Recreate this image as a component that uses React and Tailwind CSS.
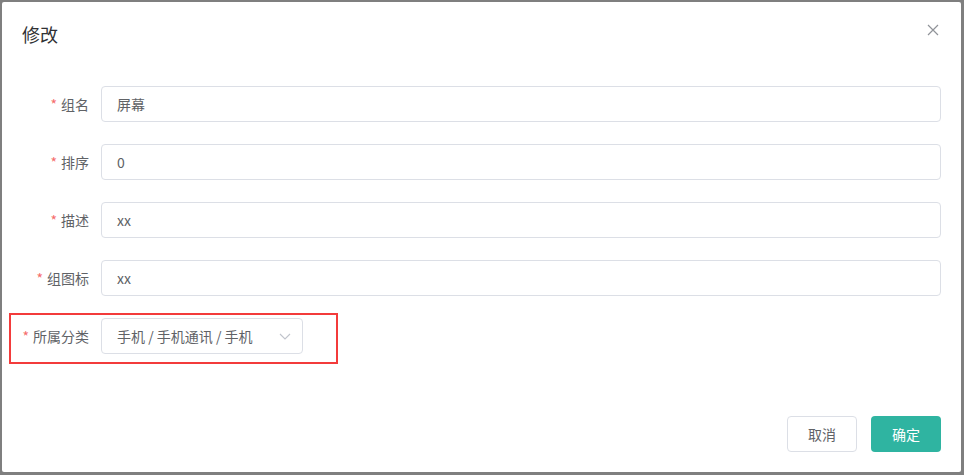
import React from "react";

const font = { fontFamily: '"Noto Sans CJK SC", "Noto Sans", sans-serif' };

function Row({ label, children }) {
  return (
    <div className="flex items-center h-[36px] mb-[22px]">
      <div className="w-[79px] pr-[12px] flex justify-end items-center text-[14px] text-[#606266] leading-[36px]">
        <span className="text-[#f56c6c] mr-[4px]">*</span>
        <span>{label}</span>
      </div>
      {children}
    </div>
  );
}

function Input({ value }) {
  return (
    <div className="flex-1 h-[36px] border border-[#dcdfe6] rounded-[4px] px-[15px] flex items-center text-[14px] text-[#606266] bg-white">
      {value}
    </div>
  );
}

export default function App() {
  return (
    <div className="w-[964px] h-[475px] bg-[#7f7f7f] pt-[2px] pl-[2px] overflow-hidden" style={font}>
      <div className="w-[959px] h-[470px] bg-white relative flex flex-col rounded-[2px]">
        <div className="pt-[20px] px-[20px] pb-[10px]">
          <div className="text-[18px] leading-[24px] text-[#303133]">修改</div>
          <button className="absolute top-[20px] right-[20px] w-[16px] h-[16px] flex items-center justify-center text-[#909399]">
            <svg width="12" height="12" viewBox="0 0 12 12">
              <path d="M1 1L11 11M11 1L1 11" stroke="#909399" strokeWidth="1.2" fill="none" />
            </svg>
          </button>
        </div>
        <div className="pt-[30px] pb-[30px] px-[20px]">
          <Row label="组名"><Input value="屏幕" /></Row>
          <Row label="排序"><Input value="0" /></Row>
          <Row label="描述"><Input value="xx" /></Row>
          <Row label="组图标"><Input value="xx" /></Row>
          <div className="relative">
            <Row label="所属分类">
              <div className="w-[202px] h-[36px] border border-[#dcdfe6] rounded-[4px] pl-[15px] pr-[10px] flex items-center justify-between text-[14px] text-[#606266] bg-white">
                <span>手机 / 手机通讯 / 手机</span>
                <svg width="14" height="14" viewBox="0 0 14 14">
                  <path d="M2 5L7 10L12 5" stroke="#c0c4cc" strokeWidth="1.1" fill="none" />
                </svg>
              </div>
            </Row>
            <div className="absolute left-[-13px] top-[-5px] w-[329px] h-[51px] border-2 border-[#f33b3b] pointer-events-none" />
          </div>
        </div>
        <div className="flex justify-end gap-[14px] px-[20px] pt-[10px] pb-[20px]">
          <button className="w-[70px] h-[36px] border border-[#dcdfe6] rounded-[4px] text-[14px] text-[#606266] bg-white">取消</button>
          <button className="w-[70px] h-[36px] rounded-[4px] text-[14px] text-white bg-[#2fb4a1]">确定</button>
        </div>
      </div>
    </div>
  );
}
